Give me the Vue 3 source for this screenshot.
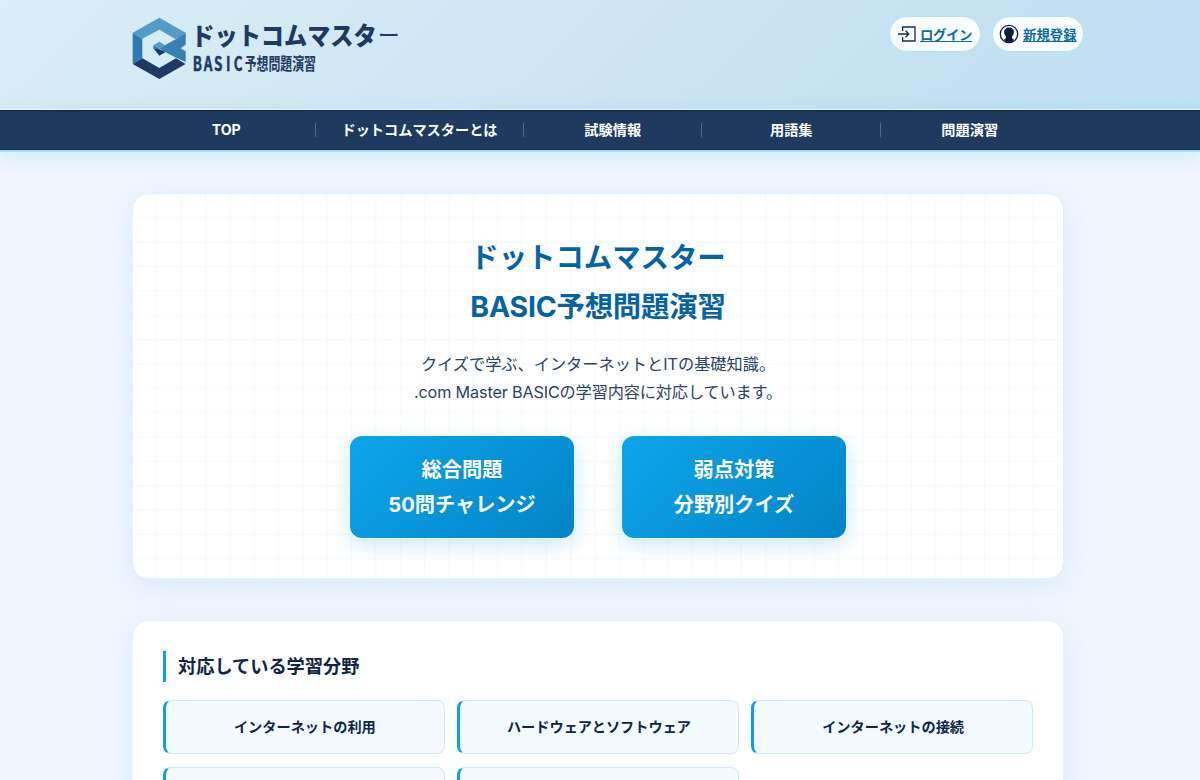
<template>
  <div class="page">
    <header class="header">
      <a class="logo" href="#">
        <svg width="268" height="64" viewBox="36 36 804 192">
          <path fill="#549bc8" d="M118 38 L197 83 L197 92 L166 102 L118 74 L67 101 L38 83 Z" />
          <path fill="#2d7bb3" d="M38 83 L67 101 L67 160 L38 177 Z" />
          <path fill="#1e3a63" d="M38 177 L67 160 L118 189 L168 160 L197 177 L118 222 Z" />
          <path fill="#3580b5" d="M197 86 L197 119 L182 130 L197 139 L197 171 L168 158 L128 137 L118 130 Z" />
          <path fill="#549bc8" d="M100 121 L118 110 L135 120 L118 131 Z" />
          <path fill="#2d7bb3" d="M100 121 L118 131 L118 138 L100 131 Z" />
          <path fill="#1e3a63" d="M102 132 L118 133 L137 141 L118 152 Z" />
          <g class="logo-text">
            <text x="214" y="119" font-size="75" textLength="556" lengthAdjust="spacingAndGlyphs">ドットコムマスタ</text>
            <text class="thin" x="773" y="116" font-size="70" textLength="66" lengthAdjust="spacingAndGlyphs">ー</text>
            <text class="latin" transform="scale(0.7 1)" x="312 359 403 454 488" y="197" font-size="58">BASIC</text>
            <text class="kanji" x="374" y="196" font-size="52" textLength="214" lengthAdjust="spacingAndGlyphs">予想問題演習</text>
          </g>
        </svg>
      </a>
      <div class="account">
        <a class="pill login" href="#">
          <svg width="18" height="16" viewBox="0 0 18 16" fill="none" stroke="#1b2b50" stroke-width="1.3">
            <path d="M4.6 5 V1 H17 V15 H4.6 V11" />
            <path d="M0 8 H10.5 M7.6 4.8 L10.8 8 L7.6 11.2" />
          </svg>
          <span>ログイン</span>
        </a>
        <a class="pill" href="#">
          <svg width="20" height="20" viewBox="0 0 20 20">
            <circle cx="10" cy="10" r="8.7" fill="#fff" stroke="#0c1c3d" stroke-width="1.3" />
            <path fill="#0c1c3d" d="M10 3.4 C13.2 3.4 15.1 5.5 14.9 8.3 C14.8 10.4 13.6 11.7 13 12.7 C12.8 14.2 13.8 14.9 15.2 15.7 C13.7 17.6 12 18.6 10 18.6 C8 18.6 6.3 17.6 4.8 15.7 C6.2 14.9 7.2 14.2 7 12.7 C6.4 11.7 5.2 10.4 5.1 8.3 C4.9 5.5 6.8 3.4 10 3.4 Z" />
          </svg>
          <span>新規登録</span>
        </a>
      </div>
    </header>

    <nav class="nav">
      <ul>
        <li v-for="item in menu" :key="item"><a href="#">{{ item }}</a></li>
      </ul>
    </nav>

    <main class="main">
      <section class="card hero">
        <h1>ドットコムマスター<br><span>BASIC予想問題演習</span></h1>
        <p>クイズで学ぶ、インターネットとITの基礎知識。<br><span>.com Master BASICの学習内容に対応しています。</span></p>
        <div class="buttons">
          <a v-for="b in buttons" :key="b.top" class="button" href="#">{{ b.top }}<br>{{ b.bottom }}</a>
        </div>
      </section>

      <section class="card fields">
        <h2>対応している学習分野</h2>
        <ul>
          <li v-for="(field, i) in fields" :key="i">{{ field }}</li>
        </ul>
      </section>
    </main>
  </div>
</template>

<script setup>
const menu = ['TOP', 'ドットコムマスターとは', '試験情報', '用語集', '問題演習']

const buttons = [
  { top: '総合問題', bottom: '50問チャレンジ' },
  { top: '弱点対策', bottom: '分野別クイズ' }
]

const fields = [
  'インターネットの利用',
  'ハードウェアとソフトウェア',
  'インターネットの接続',
  '',
  ''
]
</script>

<style>
body {
  background: #f0f5fe;
  overflow: hidden;
}
</style>

<style scoped>
.page {
  height: 780px;
  overflow: hidden;
  font-family: Inter, "Noto Sans CJK JP", sans-serif;
  color: #0f2547;
}

ul {
  list-style: none;
  margin: 0;
  padding: 0;
}

.header {
  box-sizing: border-box;
  height: 109px;
  padding: 17px 116px 0 132px;
  display: flex;
  justify-content: space-between;
  align-items: flex-start;
  background: linear-gradient(135deg, #d9eef6 0%, #cfe6f3 45%, #c5e1f2 75%, #c0e0f4 100%);
}

.logo svg {
  display: block;
}

.logo-text {
  font-family: "Noto Sans CJK JP", sans-serif;
  font-weight: 900;
  fill: #1e3a63;
}

.logo-text .thin {
  font-weight: 400;
}

.logo-text .latin,
.logo-text .kanji {
  font-weight: 700;
}

.logo-text .latin {
  stroke: #1e3a63;
  stroke-width: 1.5;
}

.account {
  display: flex;
  gap: 11px;
  margin-top: -1px;
}

.pill {
  box-sizing: border-box;
  width: 92px;
  height: 36px;
  padding-left: 6px;
  display: flex;
  align-items: center;
  gap: 4px;
  border: 1px solid #b2e2fa;
  border-radius: 18px;
  background: #fafdff;
  color: #0f6ba5;
  font-size: 13.4px;
  font-weight: 700;
  text-decoration: underline;
  white-space: nowrap;
}

.login {
  padding-left: 8px;
  letter-spacing: -0.4px;
}

.nav {
  box-sizing: border-box;
  height: 43px;
  border-top: 1px solid #f2f9fd;
  border-bottom: 2px solid #a9dbf7;
  background: #1e3a5f;
  box-shadow: inset 0 1px 0 #0b2141, inset 0 -1px 0 #173156, 0 4px 20px rgba(14, 165, 213, 0.15);
}

.nav ul {
  display: grid;
  grid-template-columns: 178.5px 208px 178.5px 178.5px 178.5px;
  padding-left: 137px;
  height: 38px;
}

.nav li {
  display: flex;
  align-items: center;
  justify-content: center;
  position: relative;
}

.nav li + li::before {
  content: "";
  position: absolute;
  left: -1px;
  top: 13px;
  width: 1px;
  height: 14px;
  background: #526883;
}

.nav a {
  color: #fff;
  font-size: 14.2px;
  font-weight: 700;
  text-decoration: none;
}

.main {
  padding: 41px 136px 0 132px;
}

.card {
  box-sizing: border-box;
  border: 1px solid #dff1fc;
  border-radius: 16px;
  background: #fff;
  box-shadow: 0 8px 28px rgba(14, 165, 213, 0.11);
}

.hero {
  height: 386px;
  padding-top: 39px;
  text-align: center;
  background-image:
    linear-gradient(to right, transparent 23.3px, #f2fafe 23.3px),
    linear-gradient(to bottom, transparent 23.3px, #f2fafe 23.3px);
  background-size: 24.35px 24.35px;
}

.hero h1 {
  margin: 0;
  font-size: 28.4px;
  line-height: 49px;
  font-weight: 700;
  color: #0464a3;
}

.hero h1 span {
  letter-spacing: -0.2px;
}

.hero p {
  margin: 19px 0 30px;
  font-size: 16.2px;
  line-height: 28px;
  color: #2a4366;
}

.hero p span {
  letter-spacing: -0.15px;
}

.buttons {
  display: flex;
  justify-content: center;
  gap: 48.5px;
}

.button {
  box-sizing: border-box;
  width: 223.5px;
  height: 102px;
  padding-top: 17px;
  border-radius: 12px;
  background: linear-gradient(135deg, #0ea5e9, #0284c7);
  box-shadow: 0 0 0 1px #edf8fe, 0 6px 20px rgba(2, 132, 220, 0.22);
  color: #fff;
  font-size: 20.2px;
  line-height: 34.5px;
  font-weight: 700;
  text-decoration: none;
}

.fields {
  margin-top: 41px;
  height: 240px;
  padding: 30px;
}

.fields h2 {
  margin: 0 0 18px;
  padding-left: 12px;
  border-left: 3px solid #0ea0e2;
  font-size: 18.2px;
  line-height: 31px;
  font-weight: 600;
}

.fields ul {
  display: grid;
  grid-template-columns: repeat(3, 1fr);
  gap: 12.6px 12.4px;
}

.fields li {
  box-sizing: border-box;
  height: 54px;
  border: 1px solid #cde9f8;
  border-left: 3px solid #0ea0e2;
  border-radius: 8px;
  background: #f3fbff;
  text-align: center;
  font-size: 14.2px;
  line-height: 52px;
  font-weight: 700;
}
</style>
